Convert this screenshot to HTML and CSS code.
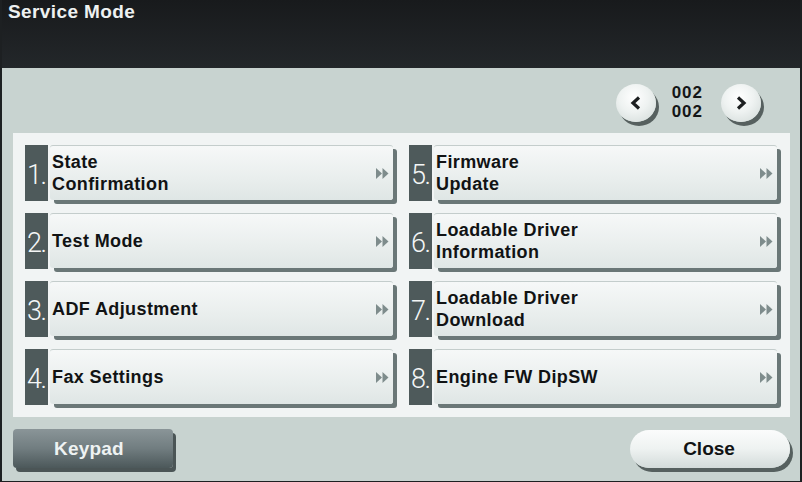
FILE: index.html
```html
<!DOCTYPE html>
<html lang="en">
<head>
<meta charset="utf-8">
<title>Service Mode</title>
<link rel="stylesheet" href="styles.css">
</head>
<body>
<div class="screen">
  <header class="titlebar">
    <h1 class="title">Service Mode</h1>
  </header>
  <main class="main">
    <div class="pager">
      <button class="round-btn" aria-label="Previous page">
        <svg width="12" height="14" viewBox="0 0 12 14"><polyline points="9,1.5 3,7 9,12.5" fill="none" stroke="#1c1f20" stroke-width="3.2"/></svg>
      </button>
      <div class="page-count"><span>002</span><span>002</span></div>
      <button class="round-btn" aria-label="Next page">
        <svg width="12" height="14" viewBox="0 0 12 14"><polyline points="3,1.5 9,7 3,12.5" fill="none" stroke="#1c1f20" stroke-width="3.2"/></svg>
      </button>
    </div>
    <section class="panel">
      <div class="menu">
        <div class="item"><span class="num">1.</span><button class="face"><span class="label">State<br>Confirmation</span><svg class="arrow" width="13" height="11" viewBox="0 0 13 11"><polygon points="0,0 6,5.5 0,11"/><polygon points="6.5,0 12.5,5.5 6.5,11"/></svg></button></div>
        <div class="item"><span class="num">5.</span><button class="face"><span class="label">Firmware<br>Update</span><svg class="arrow" width="13" height="11" viewBox="0 0 13 11"><polygon points="0,0 6,5.5 0,11"/><polygon points="6.5,0 12.5,5.5 6.5,11"/></svg></button></div>
        <div class="item"><span class="num">2.</span><button class="face"><span class="label">Test Mode</span><svg class="arrow" width="13" height="11" viewBox="0 0 13 11"><polygon points="0,0 6,5.5 0,11"/><polygon points="6.5,0 12.5,5.5 6.5,11"/></svg></button></div>
        <div class="item"><span class="num">6.</span><button class="face"><span class="label">Loadable Driver<br>Information</span><svg class="arrow" width="13" height="11" viewBox="0 0 13 11"><polygon points="0,0 6,5.5 0,11"/><polygon points="6.5,0 12.5,5.5 6.5,11"/></svg></button></div>
        <div class="item"><span class="num">3.</span><button class="face"><span class="label">ADF Adjustment</span><svg class="arrow" width="13" height="11" viewBox="0 0 13 11"><polygon points="0,0 6,5.5 0,11"/><polygon points="6.5,0 12.5,5.5 6.5,11"/></svg></button></div>
        <div class="item"><span class="num">7.</span><button class="face"><span class="label">Loadable Driver<br>Download</span><svg class="arrow" width="13" height="11" viewBox="0 0 13 11"><polygon points="0,0 6,5.5 0,11"/><polygon points="6.5,0 12.5,5.5 6.5,11"/></svg></button></div>
        <div class="item"><span class="num">4.</span><button class="face"><span class="label">Fax Settings</span><svg class="arrow" width="13" height="11" viewBox="0 0 13 11"><polygon points="0,0 6,5.5 0,11"/><polygon points="6.5,0 12.5,5.5 6.5,11"/></svg></button></div>
        <div class="item"><span class="num">8.</span><button class="face"><span class="label">Engine FW DipSW</span><svg class="arrow" width="13" height="11" viewBox="0 0 13 11"><polygon points="0,0 6,5.5 0,11"/><polygon points="6.5,0 12.5,5.5 6.5,11"/></svg></button></div>
      </div>
    </section>
    <footer class="footer">
      <button class="keypad">Keypad</button>
      <button class="close">Close</button>
    </footer>
  </main>
</div>
</body>
</html>
```
FILE: styles.css
```css
* { box-sizing: border-box; }

html, body {
  margin: 0;
  padding: 0;
  background: #1d2022;
}

body {
  width: 802px;
  height: 482px;
  font-family: "Liberation Sans", Arial, sans-serif;
}

button {
  font-family: inherit;
  border: 0;
  padding: 0;
  margin: 0;
  cursor: pointer;
}

.screen {
  width: 802px;
  height: 482px;
  display: flex;
  flex-direction: column;
  border: 2px solid #1d2022;
  border-top: 0;
  border-bottom-width: 1px;
}

/* dark title strip */
.titlebar {
  height: 68px;
  flex: none;
  background: linear-gradient(#181a1c, #23272a);
  padding: 1px 0 0 6px;
}

.title {
  margin: 0;
  color: #eef1f1;
  font-size: 19px;
  font-weight: bold;
  letter-spacing: 0.4px;
  line-height: 22px;
}

.main {
  flex: 1;
  background: #c8d3d0;
  display: flex;
  flex-direction: column;
  padding: 0 0 0 11px;
}

/* page switcher */
.pager {
  height: 65px;
  display: flex;
  align-items: center;
  justify-content: flex-end;
  padding: 2px 39px 0 0;
}

.round-btn {
  width: 40px;
  height: 38px;
  margin-top: 2px;
  border-radius: 50%;
  background: radial-gradient(circle at 45% 35%, #ffffff 0%, #eef2f1 45%, #cfd8d6 100%);
  box-shadow: 3px 4px 0 #56605f;
  display: flex;
  align-items: center;
  justify-content: center;
}

.page-count {
  display: flex;
  flex-direction: column;
  color: #141617;
  font-size: 17px;
  font-weight: bold;
  letter-spacing: 1px;
  line-height: 19px;
  margin: 0 18px 0 16px;
}

/* white panel holding the menu */
.panel {
  width: 777px;
  height: 284px;
  background: #f1f4f4;
  padding: 12px 9px 0 12px;
}

.menu {
  display: grid;
  grid-template-columns: 372px 372px;
  grid-auto-rows: 60px;
  column-gap: 12px;
  row-gap: 8px;
}

.item {
  display: flex;
  align-items: flex-start;
  gap: 2px;
}

.num {
  width: 23px;
  height: 56px;
  flex: none;
  background: #4e5a5b;
  color: #f4f6f6;
  font-family: Roboto, "Liberation Sans", sans-serif;
  font-weight: 300;
  font-size: 27px;
  letter-spacing: -1.5px;
  display: flex;
  align-items: center;
  padding: 3px 0 0 2px;
}

.face {
  position: relative;
  width: 343px;
  height: 55px;
  border-radius: 3px;
  background: linear-gradient(#f6f8f8, #e9eeed 60%, #dfe6e5);
  border-top: 1px solid #c4cdcc;
  box-shadow: 4px 4px 0 #6a7777;
  display: flex;
  align-items: center;
  justify-content: space-between;
  padding: 0 4px 0 2px;
  text-align: left;
}

.label {
  color: #111314;
  font-size: 18px;
  font-weight: bold;
  letter-spacing: 0.4px;
  line-height: 22px;
}

.arrow {
  fill: #7e8c8c;
  flex: none;
}

/* bottom buttons */
.footer {
  flex: 1;
  display: flex;
  justify-content: space-between;
  align-items: flex-start;
  padding: 12px 10px 0 0;
}

.keypad {
  width: 160px;
  height: 39px;
  border-radius: 4px;
  background: linear-gradient(#8a9598, #717d80 50%, #4c585a);
  box-shadow: 3px 4px 0 #4b5556;
  color: #eef2f2;
  font-size: 19px;
  font-weight: bold;
  letter-spacing: 0.2px;
  padding-right: 8px;
}

.close {
  width: 160px;
  height: 38px;
  margin-top: 1px;
  border-radius: 19px;
  background: linear-gradient(#fbfcfc, #eef2f1 50%, #d3dbda);
  box-shadow: 3px 4px 0 #56605f;
  color: #111314;
  font-size: 19px;
  font-weight: bold;
  padding-right: 2px;
}
```
